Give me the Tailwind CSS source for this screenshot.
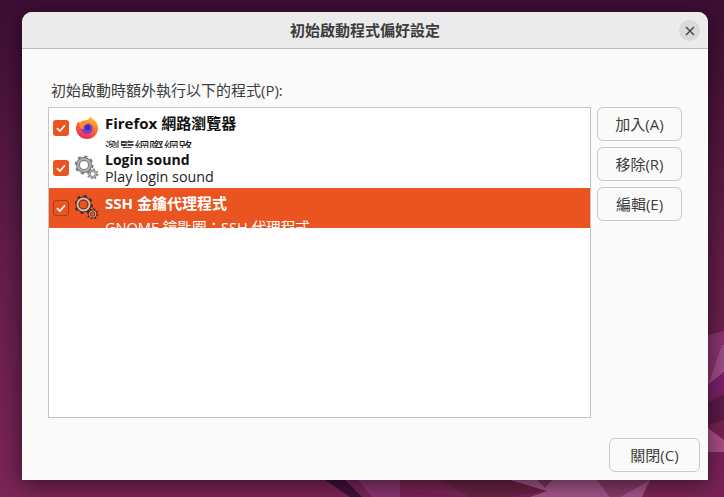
<!DOCTYPE html>
<html lang="zh-Hant">
<head>
<meta charset="utf-8">
<script src="https://cdn.jsdelivr.net/npm/@tailwindcss/browser@4"></script>
</head>
<body class="m-0">
<div class="relative w-[724px] h-[497px] overflow-hidden bg-gradient-to-b from-[#3d0e33] via-[#621d48] to-[#7c2556] font-['Open_Sans','Noto_Sans_CJK_TC',sans-serif] text-[15px] text-[#3d3d3d]">
  <svg class="absolute inset-0" width="724" height="497" viewBox="0 0 724 497">
    <polygon points="708,335 724,331 724,350 712,375 708,385" fill="#8a3470"/>
    <polygon points="722,345 724,345 724,372 708,385" fill="#9c4d88"/>
    <polygon points="724,372 724,392 708,400 708,385" fill="#7d1f6b"/>
    <polygon points="708,403 724,395 724,420 708,425" fill="#5d1a48"/>
    <polygon points="708,428 724,440 724,452 708,452" fill="#a94f85"/>
    <polygon points="708,452 724,452 724,497 708,497" fill="#7a2258"/>
    <polygon points="325,480 345,480 362,497 350,497" fill="#40103a"/>
    <polygon points="358,480 400,480 400,497 372,497" fill="#8a3570"/>
    <polygon points="440,480 510,480 545,491 510,497 470,497" fill="#6a2344"/>
    <polygon points="510,480 597,480 610,497 530,497 547,491" fill="#a5548a"/>
    <polygon points="537,480 552,480 545,488" fill="#7d3460"/>
    <polygon points="597,480 650,480 620,497 610,497" fill="#8a3a6a"/>
    <polygon points="650,480 642,497 620,497" fill="#a5548a"/>
    <polygon points="400,490 470,497 400,497" fill="#7a1e58"/>
  </svg>
  <div class="absolute left-[22px] top-[12px] w-[686px] h-[468px] flex flex-col bg-[#fafafa] rounded-t-[10px] shadow-[0_4px_22px_rgba(0,0,0,0.55)]">
    <header class="relative h-[37px] shrink-0 flex items-center justify-center bg-[#ebebeb] border-b border-[#bdbdbd] rounded-t-[10px]">
      <span class="font-bold text-[#3d3d3d]">初始啟動程式偏好設定</span>
      <span class="absolute right-[8px] top-[8px] w-[21px] h-[21px] rounded-full bg-[#dadada] flex items-center justify-center">
        <svg width="10" height="10" viewBox="0 0 10 10"><path d="M1 1L9 9M9 1L1 9" stroke="#3d3d3d" stroke-width="1.3" fill="none"/></svg>
      </span>
    </header>
    <main class="flex flex-col flex-1 pl-[26px] pr-[26px]">
      <div class="mt-[31px] h-[27px] pl-[3px] leading-[20px] text-[#3d3d3d] whitespace-nowrap">初始啟動時額外執行以下的程式(P):</div>
      <div class="flex gap-[6px]">
        <div class="w-[543px] h-[311px] bg-white border border-[#c4c4c4] flex flex-col">
          <div class="h-[40px] overflow-hidden flex items-start text-[#1c1c1c]">
            <span class="ml-[4px] mt-[12px] w-[16px] h-[16px] shrink-0 rounded-[3px] bg-[#e95420] flex items-center justify-center">
              <svg width="12" height="12" viewBox="0 0 12 12"><path d="M2 6.2L5 9L10 3.2" stroke="#fff" stroke-width="1.7" fill="none"/></svg>
            </span>
            <svg class="ml-[6px] mt-[7px] shrink-0" width="24" height="24" viewBox="0 0 24 24">
              <defs><linearGradient id="ff" x1="0.7" y1="0" x2="0.3" y2="1"><stop offset="0" stop-color="#ffcb2e"/><stop offset="0.5" stop-color="#ff6a2a"/><stop offset="1" stop-color="#e6246a"/></linearGradient></defs>
              <path d="M15 1c1 2.500 4 3 5.500 5.500C22.500 9 23 11 23 13a11 11 0 1 1-22 0c0-2.500 1-5 2.500-6.500L5 8c1-2 3-2.500 5-2.500C12.500 5 15 4 15 1z" fill="url(#ff)"/>
              <circle cx="12" cy="13.500" r="5.500" fill="#7b3bd0"/>
              <circle cx="12.500" cy="12.500" r="2.600" fill="#3f2aa8"/>
              <path d="M4 9c3-2 8-2 9 0-3 0-5 2-4 5-3 0-5-2-5-5z" fill="#ff8a2a"/>
            </svg>
            <div class="ml-[6px] flex flex-col whitespace-nowrap">
              <span class="font-bold leading-[20px] mt-[5px] text-[#111]">Firefox 網路瀏覽器</span>
              <span class="text-[14.700px] leading-[20px] mt-[4px]">瀏覽網際網路</span>
            </div>
          </div>
          <div class="h-[40px] overflow-hidden flex items-start text-[#1c1c1c]">
            <span class="ml-[4px] mt-[12px] w-[16px] h-[16px] shrink-0 rounded-[3px] bg-[#e95420] flex items-center justify-center">
              <svg width="12" height="12" viewBox="0 0 12 12"><path d="M2 6.200L5 9L10 3.200" stroke="#fff" stroke-width="1.700" fill="none"/></svg>
            </span>
            <svg class="ml-[6px] mt-[7px] shrink-0" width="24" height="24" viewBox="0 0 24 24">
              <circle cx="9" cy="10" r="8.500" fill="none" stroke="#787878" stroke-width="2" stroke-dasharray="3 3.680"/>
              <circle cx="9" cy="10" r="6" fill="none" stroke="#787878" stroke-width="4"/>
              <circle cx="9" cy="10" r="6" fill="none" stroke="#b0b0b0" stroke-width="2"/>
              <circle cx="17.700" cy="19" r="5" fill="none" stroke="#808080" stroke-width="1.400" stroke-dasharray="1.800 2.120"/>
              <circle cx="17.700" cy="19" r="3.200" fill="#fff" stroke="#808080" stroke-width="2.400"/>
              <circle cx="17.700" cy="19" r="3.200" fill="none" stroke="#b8b8b8" stroke-width="1"/>
            </svg>
            <div class="ml-[6px] flex flex-col whitespace-nowrap">
              <span class="font-bold text-[14px] leading-[17px] mt-[3px] text-[#111]">Login sound</span>
              <span class="text-[14.300px] leading-[17px] mt-[0px]">Play login sound</span>
            </div>
          </div>
          <div class="h-[40px] overflow-hidden flex items-start bg-[#e95420] text-white">
            <span class="ml-[4px] mt-[12px] w-[16px] h-[16px] shrink-0 rounded-[3px] bg-[#e95420] border border-[#a83c17] flex items-center justify-center">
              <svg width="12" height="12" viewBox="0 0 12 12"><path d="M2 6.200L5 9L10 3.200" stroke="#fff" stroke-width="1.700" fill="none"/></svg>
            </span>
            <svg class="ml-[6px] mt-[7px] shrink-0" width="24" height="24" viewBox="0 0 24 24">
              <circle cx="8.500" cy="9.500" r="8.500" fill="none" stroke="#4a2a1c" stroke-width="2" stroke-dasharray="3 3.680"/>
              <circle cx="8.500" cy="9.500" r="6" fill="none" stroke="#4a2a1c" stroke-width="4"/>
              <circle cx="8.500" cy="9.500" r="6" fill="none" stroke="#d8b8a8" stroke-width="2"/>
              <circle cx="17.700" cy="19" r="5" fill="none" stroke="#4a2a1c" stroke-width="1.400" stroke-dasharray="1.800 2.120"/>
              <circle cx="17.700" cy="19" r="3.200" fill="#e95420" stroke="#4a2a1c" stroke-width="2.400"/>
              <circle cx="17.700" cy="19" r="3.200" fill="none" stroke="#d8b8a8" stroke-width="1"/>
            </svg>
            <div class="ml-[6px] flex flex-col whitespace-nowrap">
              <span class="font-bold leading-[20px] mt-[5px]">SSH 金鑰代理程式</span>
              <span class="text-[14.700px] tracking-[-0.1px] leading-[20px] mt-[4px]">GNOME 鑰匙圈：SSH 代理程式</span>
            </div>
          </div>
        </div>
        <div class="flex flex-col gap-[6px]">
          <button class="w-[85px] h-[34px] bg-[#fafafa] border border-[#c9c9c9] rounded-[6px] text-[#3d3d3d]">加入(A)</button>
          <button class="w-[85px] h-[34px] bg-[#fafafa] border border-[#c9c9c9] rounded-[6px] text-[#3d3d3d]">移除(R)</button>
          <button class="w-[85px] h-[34px] bg-[#fafafa] border border-[#c9c9c9] rounded-[6px] text-[#3d3d3d]">編輯(E)</button>
        </div>
      </div>
      <div class="mt-[20px] flex justify-end -mr-[18px]">
        <button class="w-[91px] h-[34px] bg-[#fafafa] border border-[#c9c9c9] rounded-[6px] text-[#3d3d3d]">關閉(C)</button>
      </div>
    </main>
  </div>
</div>
</body>
</html>
